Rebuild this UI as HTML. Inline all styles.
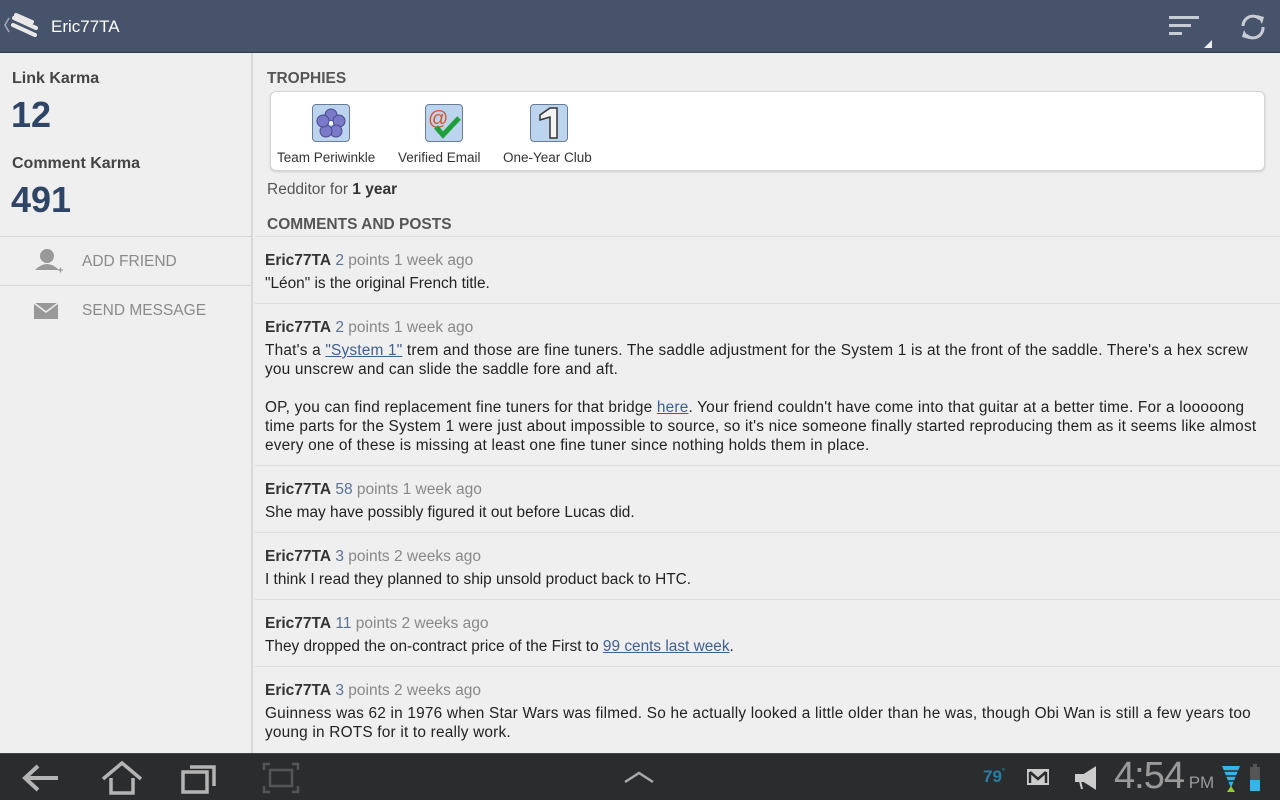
<!DOCTYPE html>
<html><head><meta charset="utf-8"><style>
*{margin:0;padding:0;box-sizing:border-box}
body{width:1280px;height:800px;overflow:hidden;background:#efefef;font-family:"Liberation Sans",sans-serif;position:relative;color:#222}
.top{position:absolute;left:0;top:0;width:1280px;height:53px;background:#46536a;border-bottom:1px solid #2f3a4c}
.top .t{position:absolute;left:51px;top:17px;color:#fff;font-size:17px}
.side{position:absolute;left:0;top:53px;width:253px;height:700px;border-right:2px solid #d8d8d8}
.lbl{position:absolute;left:12px;font-size:16px;font-weight:bold;color:#444}
.num{position:absolute;left:11px;font-size:36px;font-weight:bold;color:#2f4565}
.sb{position:absolute;left:0;width:252px;height:1px;background:#d6d6d6}
.act{position:absolute;left:82px;font-size:15.5px;color:#8a8a8a}
.main{position:absolute;left:255px;top:53px;width:1025px;height:700px}
.h{position:absolute;left:12px;font-size:15.5px;font-weight:bold;color:#555}
.tro{position:absolute;left:15px;top:38px;width:995px;height:80px;background:#fff;border:1px solid #d4d4d4;border-radius:6px;box-shadow:0 1px 2px #ccc}
.tr{position:absolute;top:58px;font-size:13.5px;color:#333}
.ic{position:absolute;top:12px;width:38px;height:38px;border:1.5px solid #6a7c94;border-radius:4px;background:#bcd4ee}
.c{position:absolute;left:0;width:1025px;border-top:1px solid #dcdcdc;padding:14px 10px 0 10px;font-size:15.4px;line-height:19px;color:#222}
.nw{white-space:nowrap;letter-spacing:0.2px}
.nw .m{letter-spacing:0}
.c .m{color:#888;margin-bottom:4px;font-size:15.5px}
.c .m b{color:#333}
.c .m span{color:#5a7196}
a{color:#3f5f8f;text-decoration:underline}
.bot{position:absolute;left:0;top:753px;width:1280px;height:47px;background:#2b2c2e;border-top:1px solid #444}
</style></head><body>
<div class="top">
<svg style="position:absolute;left:2px;top:12px" width="40" height="28"><path d="M7 6 L3 13 L7 20" stroke="#aab" stroke-width="1.5" fill="none"/><path d="M12 6 L34 16 M11 13 L33 23 M14 3 L30 10" stroke="#e8e8e8" stroke-width="4" stroke-linecap="round"/></svg>
<div class="t">Eric77TA</div>
<svg style="position:absolute;left:1166px;top:14px" width="48" height="36"><rect x="3" y="2" width="30" height="3" fill="#c8ccd4"/><rect x="3" y="10" width="22" height="3" fill="#c8ccd4"/><rect x="3" y="18" width="13" height="3" fill="#c8ccd4"/><path d="M38 34 L46 34 L46 26 Z" fill="#eee"/></svg>
<svg style="position:absolute;left:1238px;top:12px" width="30" height="30"><path d="M5 14 A10 10 0 0 1 22 7 M25 15 A10 10 0 0 1 8 23" stroke="#c8ccd4" stroke-width="3" fill="none"/><path d="M19 3 L26 5 L24 12Z M11 27 L4 25 L6 18Z" fill="#c8ccd4"/></svg>
</div>
<div class="side">
<div class="lbl" style="top:17px">Link Karma</div>
<div class="num" style="top:41px">12</div>
<div class="lbl" style="top:102px">Comment Karma</div>
<div class="num" style="top:126px">491</div>
<div class="sb" style="top:183px"></div>
<svg style="position:absolute;left:34px;top:195px" width="30" height="28"><circle cx="13" cy="8" r="7" fill="#999"/><path d="M1 22 Q13 10 25 22 Z" fill="#999"/><path d="M24 22 h5 M26.5 19.5 v5" stroke="#999" stroke-width="1.2"/></svg>
<div class="act" style="top:200px">ADD FRIEND</div>
<div class="sb" style="top:232px"></div>
<svg style="position:absolute;left:34px;top:250px" width="26" height="18"><rect x="0" y="0" width="24" height="16" fill="#999"/><path d="M0 0 L12 9 L24 0" stroke="#efefef" stroke-width="1.5" fill="none"/></svg>
<div class="act" style="top:249px">SEND MESSAGE</div>
</div>
<div class="main">
<div class="h" style="top:17px">TROPHIES</div>
<div class="tro">
<div class="ic" style="left:41px"><svg width="36" height="36"><g fill="#7a7ac8" stroke="#4a4a90"><circle cx="18" cy="10" r="6"/><circle cx="26" cy="16" r="6"/><circle cx="23" cy="26" r="6"/><circle cx="13" cy="26" r="6"/><circle cx="10" cy="16" r="6"/></g><circle cx="18" cy="18" r="2" fill="#fff"/></svg></div>
<div class="tr" style="left:6px">Team Periwinkle</div>
<div class="ic" style="left:154px"><svg width="36" height="36"><text x="2" y="20" font-size="20" fill="#d9532a" font-family="Liberation Sans">@</text><path d="M10 22 L17 30 L33 13" stroke="#1f9e3a" stroke-width="5" fill="none"/></svg></div>
<div class="tr" style="left:127px">Verified Email</div>
<div class="ic" style="left:259px"><svg width="36" height="36"><path d="M9 10 L19 3 L26 3 L26 33 L19 33 L19 12 L9 15Z" fill="#f4f4f4" stroke="#333" stroke-width="1.5"/></svg></div>
<div class="tr" style="left:232px">One-Year Club</div>
</div>
<div style="position:absolute;left:12px;top:128px;font-size:15.5px;color:#555">Redditor for <b style="color:#333">1 year</b></div>
<div class="h" style="top:163px">COMMENTS AND POSTS</div>
<div class="c" style="top:183px"><div class="m"><b>Eric77TA</b> <span>2</span> points 1 week ago</div>"Léon" is the original French title.</div>
<div class="c nw" style="top:250px"><div class="m"><b>Eric77TA</b> <span>2</span> points 1 week ago</div>That's a <a>"System 1"</a> trem and those are fine tuners. The saddle adjustment for the System 1 is at the front of the saddle. There's a hex screw<br>you unscrew and can slide the saddle fore and aft.<div style="height:19px"></div>OP, you can find replacement fine tuners for that bridge <a>here</a>. Your friend couldn't have come into that guitar at a better time. For a looooong<br>time parts for the System 1 were just about impossible to source, so it's nice someone finally started reproducing them as it seems like almost<br>every one of these is missing at least one fine tuner since nothing holds them in place.</div>
<div class="c" style="top:412px"><div class="m"><b>Eric77TA</b> <span>58</span> points 1 week ago</div>She may have possibly figured it out before Lucas did.</div>
<div class="c" style="top:479px"><div class="m"><b>Eric77TA</b> <span>3</span> points 2 weeks ago</div>I think I read they planned to ship unsold product back to HTC.</div>
<div class="c" style="top:546px"><div class="m"><b>Eric77TA</b> <span>11</span> points 2 weeks ago</div>They dropped the on-contract price of the First to <a>99 cents last week</a>.</div>
<div class="c nw" style="top:613px"><div class="m"><b>Eric77TA</b> <span>3</span> points 2 weeks ago</div>Guinness was 62 in 1976 when Star Wars was filmed. So he actually looked a little older than he was, though Obi Wan is still a few years too<br>young in ROTS for it to really work.</div>
</div>
<div class="bot">
<svg style="position:absolute;left:18px;top:8px" width="40" height="32"><path d="M20 4 L7 16 L20 28 M7 16 H40" stroke="#b4b4b4" stroke-width="4" fill="none"/></svg>
<svg style="position:absolute;left:100px;top:6px" width="46" height="36"><path d="M3 19 L22 3 L41 19 M11 18 V33 H33 V18" stroke="#b4b4b4" stroke-width="3.5" fill="none"/></svg>
<svg style="position:absolute;left:180px;top:8px" width="40" height="34"><rect x="3" y="10" width="24" height="20" stroke="#b4b4b4" stroke-width="3.5" fill="none"/><path d="M10 5 H34 V24" stroke="#b4b4b4" stroke-width="3.5" fill="none"/></svg>
<svg style="position:absolute;left:262px;top:8px" width="40" height="34"><path d="M2 8 V2 H8 M30 2 H36 V8 M36 24 V30 H30 M8 30 H2 V24" stroke="#555" stroke-width="2.5" fill="none"/><rect x="8" y="8" width="22" height="16" stroke="#555" stroke-width="2.5" fill="none"/></svg>
<svg style="position:absolute;left:622px;top:16px" width="36" height="16"><path d="M3 12 L17 3 L31 12" stroke="#aaa" stroke-width="2.5" fill="none"/></svg>
<div style="position:absolute;left:983px;top:13px;font-size:17px;font-weight:bold;color:#2a7fa8">79<span style="font-size:8px;vertical-align:top">°</span></div>
<svg style="position:absolute;left:1026px;top:14px" width="26" height="20"><rect x="1" y="1" width="22" height="16" fill="#ccc"/><path d="M4 4 L4 15 M20 4 L20 15 M4 4 L12 11 L20 4" stroke="#2b2c2e" stroke-width="2.5" fill="none"/></svg>
<svg style="position:absolute;left:1072px;top:12px" width="30" height="26"><path d="M4 9 H12 L23 2 V22 L12 15 H4Z M8 15 L10 23" fill="#ccc" stroke="#ccc" stroke-width="2"/></svg>
<div style="position:absolute;left:1114px;top:1px;font-size:38px;color:#9a9a9a;letter-spacing:-1px">4:54<span style="font-size:17px;letter-spacing:0"> PM</span></div>
<svg style="position:absolute;left:1221px;top:10px" width="20" height="30"><path d="M1 2 H19 L10 24Z" fill="#33b5e5"/><path d="M1 7 H19 M1 12 H19 M1 17 H19" stroke="#2b2c2e" stroke-width="1.5"/><path d="M10 22 L14 28 H6Z" fill="#9c3"/></svg>
<svg style="position:absolute;left:1248px;top:10px" width="14" height="28"><rect x="2" y="3" width="10" height="24" fill="#555"/><rect x="2" y="16" width="10" height="11" fill="#33b5e5"/><rect x="5" y="0" width="4" height="3" fill="#555"/></svg>
</div>
</body></html>
